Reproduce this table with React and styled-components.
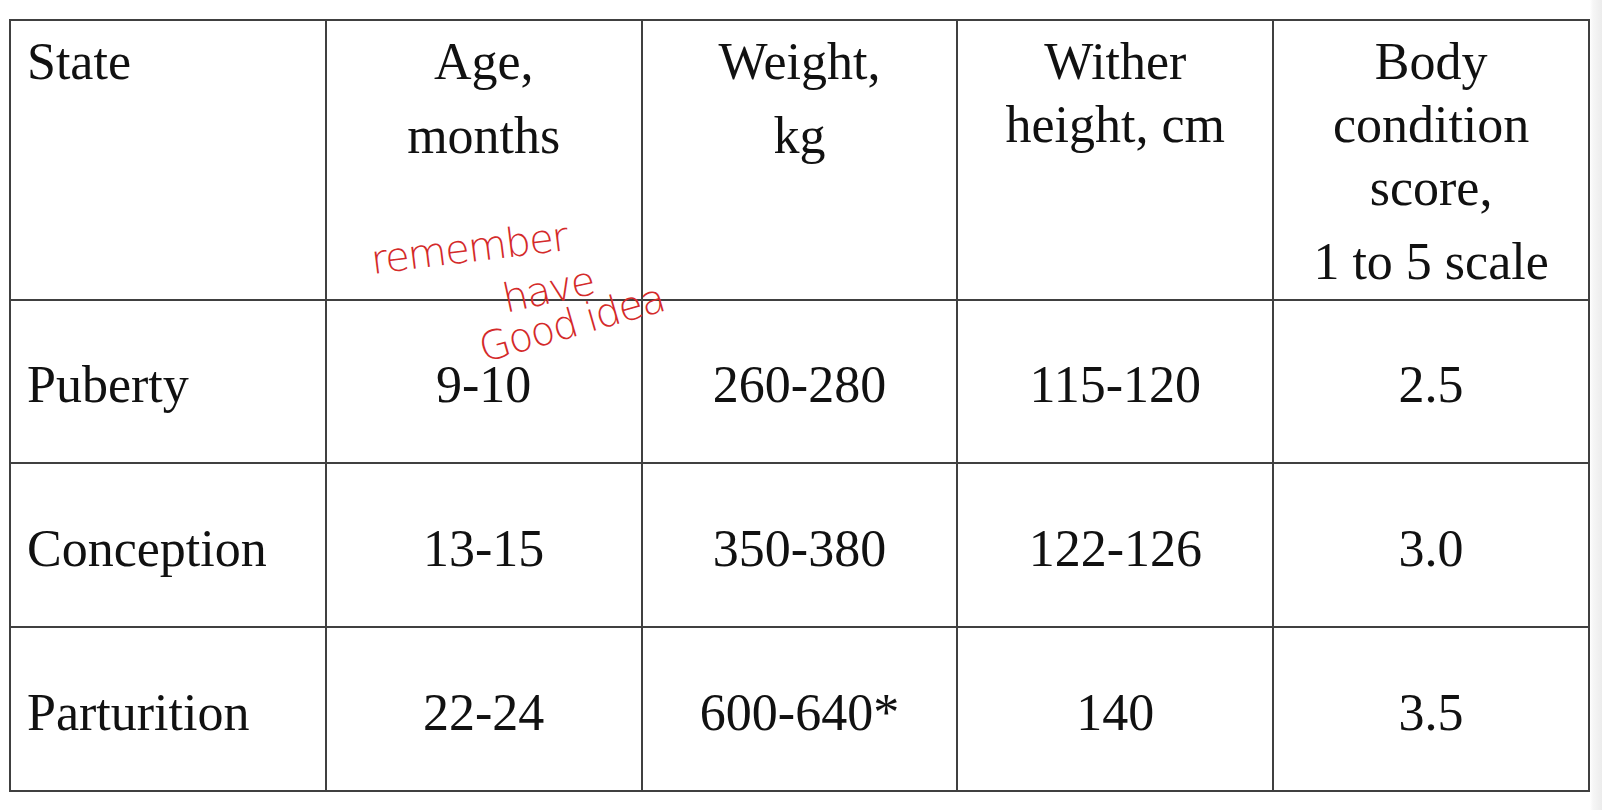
import React from 'react'
import styled, { createGlobalStyle } from 'styled-components'

const GlobalStyle = createGlobalStyle`
  html, body {
    margin: 0;
    padding: 0;
  }
  body {
    width: 1602px;
    height: 810px;
    overflow: hidden;
    background: linear-gradient(90deg, #ffffff 1590px, #f6f6f6 1593px, #ececec 1602px);
    font-family: 'Liberation Serif', 'Times New Roman', serif;
    color: #111;
  }
`

const Page = styled.div`
  padding: 19px 0 0 9px;
`

const Sheet = styled.div`
  position: relative;
  width: 1581px;
`

const Grid = styled.div`
  display: grid;
  grid-template-columns: repeat(5, 1fr);
  grid-template-rows: 278px 161px 162px 162px;
  gap: 2px;
  padding: 2px;
  background: #404040;
`

const HeadCell = styled.div`
  background: #fff;
  padding: 9px 16px 0;
  text-align: ${p => (p.$left ? 'left' : 'center')};
  font-size: 52px;
  line-height: 63px;
`

const Line = styled.div`
  margin-top: ${p => (p.$gap ? '11px' : '0')};
  white-space: nowrap;
`

const Cell = styled.div`
  background: #fff;
  display: flex;
  align-items: center;
  justify-content: ${p => (p.$left ? 'flex-start' : 'center')};
  padding: 6px 16px 0;
  font-size: 52px;
  white-space: nowrap;
`

// handwritten note scribbled over the header
const Ink = styled.span`
  position: absolute;
  left: ${p => p.$x}px;
  top: ${p => p.$y}px;
  transform: rotate(${p => p.$r}deg);
  transform-origin: left center;
  font-family: 'DejaVu Sans', sans-serif;
  font-weight: 300;
  font-size: 40px;
  line-height: 1;
  color: #d42a2a;
  white-space: nowrap;
  letter-spacing: -1.5px;
`

const header = [
  { left: true, lines: [['State']] },
  { lines: [['Age,'], ['months', true]] },
  { lines: [['Weight,'], ['kg', true]] },
  { lines: [['Wither'], ['height, cm']] },
  { lines: [['Body'], ['condition'], ['score,'], ['1 to 5 scale', true]] },
]

const rows = [
  ['Puberty', '9-10', '260-280', '115-120', '2.5'],
  ['Conception', '13-15', '350-380', '122-126', '3.0'],
  ['Parturition', '22-24', '600-640*', '140', '3.5'],
]

export default function App() {
  return (
    <>
      <GlobalStyle />
      <Page>
        <Sheet>
          <Grid>
            {header.map((h, i) => (
              <HeadCell key={i} $left={h.left}>
                {h.lines.map(([t, gap], j) => (
                  <Line key={j} $gap={gap}>{t}</Line>
                ))}
              </HeadCell>
            ))}
            {rows.map((r, i) =>
              r.map((v, j) => (
                <Cell key={i + '-' + j} $left={j === 0}>{v}</Cell>
              ))
            )}
          </Grid>
          <Ink $x={362} $y={221} $r={-7}>remember</Ink>
          <Ink $x={494} $y={260} $r={-12}>have</Ink>
          <Ink $x={471} $y={310} $r={-16}>Good idea</Ink>
        </Sheet>
      </Page>
    </>
  )
}
